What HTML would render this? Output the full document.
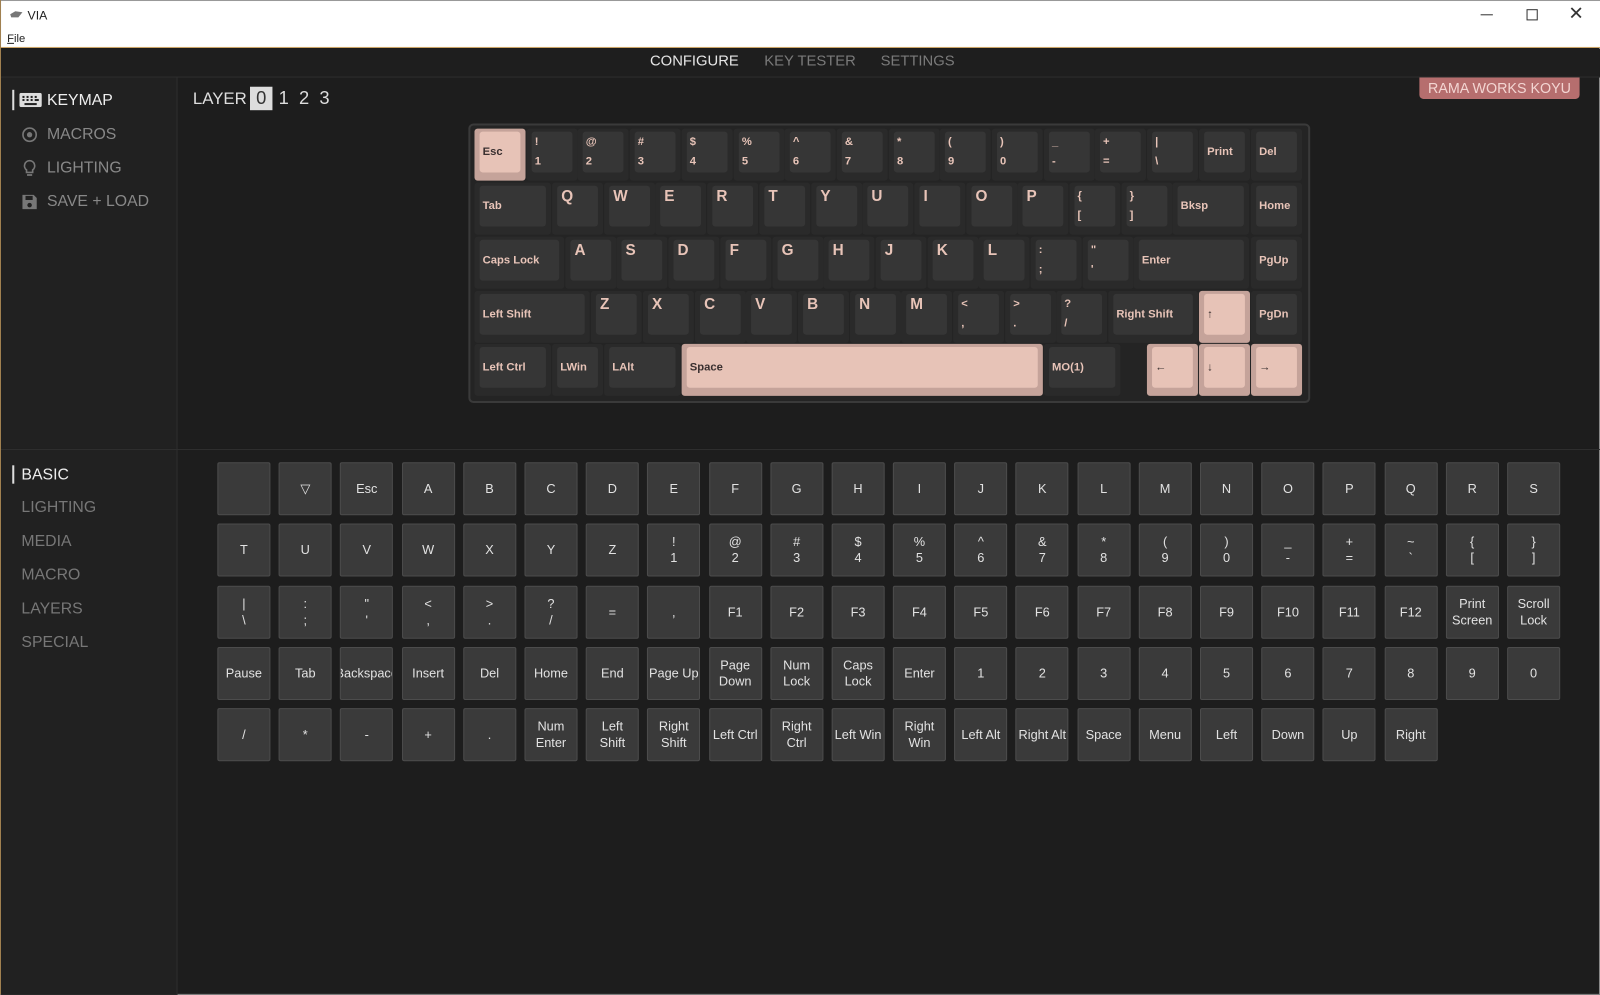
<!DOCTYPE html>
<html><head><meta charset="utf-8"><style>
*{box-sizing:border-box;margin:0;padding:0}
html,body{width:1600px;height:995px;overflow:hidden;background:#1d1d1d}
#w{position:absolute;left:0;top:0;width:1568px;height:975px;transform:scale(1.020408);transform-origin:0 0;background:#1d1d1d;font-family:"Liberation Sans",sans-serif;border-left:1px solid #a08050;border-right:1px solid #888;border-bottom:1px solid #888}
.a{position:absolute}
#title{left:0;top:0;width:1567px;height:47px;background:#fff;border-top:1px solid #999;border-bottom:1px solid #c8a060}
.nav{top:52px;font-size:14.5px;color:#7a7a7a}
.side{color:#888;font-size:15.5px}
.k{position:absolute;height:51px;background:#2a2a2a;border-radius:3px}
.k i{position:absolute;left:5px;right:5px;top:3px;bottom:8px;background:#363636;border-radius:3px;font-style:normal;color:#e8c4b8;font-weight:bold;font-size:11px;padding-left:3px;padding-top:1px;line-height:19px;white-space:nowrap}
.k.m i{line-height:40px;padding-top:0}
.k.l i{font-size:15px;padding-left:4px}
.k.p{background:#c5a39a}.k.p i{background:#e7c3b7;color:#3a3030}
#grid{position:absolute;left:212px;top:453px;display:grid;grid-template-columns:repeat(22,52px);column-gap:8.2px;row-gap:8.3px}
#grid div{width:52px;height:52px;background:#3a3a3a;border:1px solid #4c4c4c;border-radius:2px;color:#e2e2e2;font-size:12.5px;display:flex;align-items:center;justify-content:center;text-align:center;line-height:16px;overflow:hidden;white-space:nowrap}
</style></head><body><div id="w">
<div id="title" class="a">
 <svg class="a" style="left:8px;top:9px" width="14" height="8"><path d="M1 4 L6 1 L13 2 L9 7 L2 7Z" fill="#777"/></svg>
 <div class="a" style="left:26px;top:7px;font-size:12px;color:#222">VIA</div>
 <div class="a" style="left:6px;top:31px;font-size:11px;color:#222"><u>F</u>ile</div>
 <div class="a" style="left:1450px;top:13px;width:12px;height:1px;background:#333"></div>
 <div class="a" style="left:1495px;top:8px;width:11px;height:11px;border:1px solid #333"></div>
 <div class="a" style="left:1536px;top:2px;font-size:18px;color:#333">✕</div>
</div>
<div class="a" style="left:0;top:48px;width:1567px;height:28px;border-bottom:1px solid #2e2e2e;background:#1e1e1e"></div>
<div class="a nav" style="left:636px;color:#e6e6e6">CONFIGURE</div>
<div class="a nav" style="left:748px">KEY TESTER</div>
<div class="a nav" style="left:862px">SETTINGS</div>
<div class="a" style="left:0;top:76px;width:173px;height:899px;background:#212121;border-right:1px solid #2e2e2e"></div>
<div class="a" style="left:0;top:440px;width:1567px;height:1px;background:#2e2e2e"></div>
<div class="a" style="left:11px;top:88px;width:2px;height:20px;background:#ddd"></div>
<svg class="a" style="left:18px;top:91px" width="22" height="14"><rect x="0" y="0" width="22" height="14" rx="2" fill="#ddd"/><g fill="#212121"><rect x="3" y="3" width="2" height="2"/><rect x="7" y="3" width="2" height="2"/><rect x="11" y="3" width="2" height="2"/><rect x="15" y="3" width="2" height="2"/><rect x="3" y="6" width="2" height="2"/><rect x="7" y="6" width="2" height="2"/><rect x="11" y="6" width="2" height="2"/><rect x="15" y="6" width="4" height="2"/><rect x="5" y="10" width="12" height="2"/></g></svg>
<div class="a side" style="left:45px;top:90px;color:#eee">KEYMAP</div>
<svg class="a" style="left:20px;top:124px" width="16" height="16"><circle cx="8" cy="8" r="6.5" stroke="#777" stroke-width="1.6" fill="none"/><circle cx="8" cy="8" r="2.6" fill="#777"/></svg>
<div class="a side" style="left:45px;top:123px">MACROS</div>
<svg class="a" style="left:21px;top:156px" width="14" height="18"><path d="M7 1.5a5 5 0 0 0-3 9v2.5h6v-2.5a5 5 0 0 0-3-9z" stroke="#777" stroke-width="1.6" fill="none"/><path d="M4.5 15.5h5" stroke="#777" stroke-width="1.6"/></svg>
<div class="a side" style="left:45px;top:156px">LIGHTING</div>
<svg class="a" style="left:20px;top:190px" width="16" height="16"><path d="M1 1h11l3 3v11H1z" fill="#777"/><rect x="4" y="2" width="7" height="4" fill="#212121"/><circle cx="8" cy="11" r="2.2" fill="#212121"/></svg>
<div class="a side" style="left:45px;top:189px">SAVE + LOAD</div>
<div class="a" style="left:188px;top:88px;font-size:16.5px;color:#ddd">LAYER</div>
<div class="a" style="left:244px;top:85px;width:22px;height:23px;background:#ddd;color:#333;font-size:18px;text-align:center;line-height:23px">0</div>
<div class="a" style="left:272px;top:86px;font-size:18px;color:#ddd;word-spacing:5px">1 2 3</div>
<div class="a" style="left:1390px;top:76px;width:157px;height:21px;background:#b66e6e;border-radius:0 0 4px 4px;color:#f3d5d2;font-size:14px;text-align:center;line-height:21px">RAMA WORKS KOYU</div>
<div class="a" style="left:458px;top:121px;width:825px;height:274px;background:#242424;border:2px solid #3a3a3a;border-radius:5px"></div>
<!-- row1 -->
<div class="k p m" style="left:464px;top:126px;width:50px"><i>Esc</i></div>
<div class="k" style="left:515px;top:126px;width:50px"><i>!<br>1</i></div>
<div class="k" style="left:565px;top:126px;width:50px"><i>@<br>2</i></div>
<div class="k" style="left:616px;top:126px;width:50px"><i>#<br>3</i></div>
<div class="k" style="left:667px;top:126px;width:50px"><i>$<br>4</i></div>
<div class="k" style="left:718px;top:126px;width:50px"><i>%<br>5</i></div>
<div class="k" style="left:768px;top:126px;width:50px"><i>^<br>6</i></div>
<div class="k" style="left:819px;top:126px;width:50px"><i>&amp;<br>7</i></div>
<div class="k" style="left:870px;top:126px;width:50px"><i>*<br>8</i></div>
<div class="k" style="left:920px;top:126px;width:50px"><i>(<br>9</i></div>
<div class="k" style="left:971px;top:126px;width:50px"><i>)<br>0</i></div>
<div class="k" style="left:1022px;top:126px;width:50px"><i>_<br>-</i></div>
<div class="k" style="left:1072px;top:126px;width:50px"><i>+<br>=</i></div>
<div class="k" style="left:1123px;top:126px;width:50px"><i>|<br>\</i></div>
<div class="k m" style="left:1174px;top:126px;width:50px"><i>Print</i></div>
<div class="k m" style="left:1225px;top:126px;width:50px"><i>Del</i></div>
<!-- row2 -->
<div class="k m" style="left:464px;top:179px;width:75px"><i>Tab</i></div>
<div class="k l" style="left:540px;top:179px;width:50px"><i>Q</i></div>
<div class="k l" style="left:591px;top:179px;width:50px"><i>W</i></div>
<div class="k l" style="left:641px;top:179px;width:50px"><i>E</i></div>
<div class="k l" style="left:692px;top:179px;width:50px"><i>R</i></div>
<div class="k l" style="left:743px;top:179px;width:50px"><i>T</i></div>
<div class="k l" style="left:794px;top:179px;width:50px"><i>Y</i></div>
<div class="k l" style="left:844px;top:179px;width:50px"><i>U</i></div>
<div class="k l" style="left:895px;top:179px;width:50px"><i>I</i></div>
<div class="k l" style="left:946px;top:179px;width:50px"><i>O</i></div>
<div class="k l" style="left:996px;top:179px;width:50px"><i>P</i></div>
<div class="k" style="left:1047px;top:179px;width:50px"><i>{<br>[</i></div>
<div class="k" style="left:1098px;top:179px;width:50px"><i>}<br>]</i></div>
<div class="k m" style="left:1148px;top:179px;width:75px"><i>Bksp</i></div>
<div class="k m" style="left:1225px;top:179px;width:50px"><i>Home</i></div>
<!-- row3 -->
<div class="k m" style="left:464px;top:232px;width:88px"><i>Caps Lock</i></div>
<div class="k l" style="left:553px;top:232px;width:50px"><i>A</i></div>
<div class="k l" style="left:603px;top:232px;width:50px"><i>S</i></div>
<div class="k l" style="left:654px;top:232px;width:50px"><i>D</i></div>
<div class="k l" style="left:705px;top:232px;width:50px"><i>F</i></div>
<div class="k l" style="left:756px;top:232px;width:50px"><i>G</i></div>
<div class="k l" style="left:806px;top:232px;width:50px"><i>H</i></div>
<div class="k l" style="left:857px;top:232px;width:50px"><i>J</i></div>
<div class="k l" style="left:908px;top:232px;width:50px"><i>K</i></div>
<div class="k l" style="left:958px;top:232px;width:50px"><i>L</i></div>
<div class="k" style="left:1009px;top:232px;width:50px"><i>:<br>;</i></div>
<div class="k" style="left:1060px;top:232px;width:50px"><i>"<br>'</i></div>
<div class="k m" style="left:1110px;top:232px;width:113px"><i>Enter</i></div>
<div class="k m" style="left:1225px;top:232px;width:50px"><i>PgUp</i></div>
<!-- row4 -->
<div class="k m" style="left:464px;top:285px;width:113px"><i>Left Shift</i></div>
<div class="k l" style="left:578px;top:285px;width:50px"><i>Z</i></div>
<div class="k l" style="left:629px;top:285px;width:50px"><i>X</i></div>
<div class="k l" style="left:680px;top:285px;width:50px"><i>C</i></div>
<div class="k l" style="left:730px;top:285px;width:50px"><i>V</i></div>
<div class="k l" style="left:781px;top:285px;width:50px"><i>B</i></div>
<div class="k l" style="left:832px;top:285px;width:50px"><i>N</i></div>
<div class="k l" style="left:882px;top:285px;width:50px"><i>M</i></div>
<div class="k" style="left:933px;top:285px;width:50px"><i>&lt;<br>,</i></div>
<div class="k" style="left:984px;top:285px;width:50px"><i>&gt;<br>.</i></div>
<div class="k" style="left:1034px;top:285px;width:50px"><i>?<br>/</i></div>
<div class="k m" style="left:1085px;top:285px;width:88px"><i>Right Shift</i></div>
<div class="k p m" style="left:1174px;top:285px;width:50px"><i>↑</i></div>
<div class="k m" style="left:1225px;top:285px;width:50px"><i>PgDn</i></div>
<!-- row5 -->
<div class="k m" style="left:464px;top:337px;width:75px"><i>Left Ctrl</i></div>
<div class="k m" style="left:540px;top:337px;width:50px"><i>LWin</i></div>
<div class="k m" style="left:591px;top:337px;width:75px"><i>LAlt</i></div>
<div class="k p m" style="left:667px;top:337px;width:354px"><i>Space</i></div>
<div class="k m" style="left:1022px;top:337px;width:75px"><i>MO(1)</i></div>
<div class="k p m" style="left:1123px;top:337px;width:50px"><i>←</i></div>
<div class="k p m" style="left:1174px;top:337px;width:50px"><i>↓</i></div>
<div class="k p m" style="left:1225px;top:337px;width:50px"><i>→</i></div>
<!-- bottom sidebar -->
<div class="a" style="left:11px;top:456px;width:2px;height:18px;background:#ddd"></div>
<div class="a side" style="left:20px;top:457px;color:#eee">BASIC</div>
<div class="a side" style="left:20px;top:489px;color:#777">LIGHTING</div>
<div class="a side" style="left:20px;top:522px;color:#777">MEDIA</div>
<div class="a side" style="left:20px;top:555px;color:#777">MACRO</div>
<div class="a side" style="left:20px;top:588px;color:#777">LAYERS</div>
<div class="a side" style="left:20px;top:621px;color:#777">SPECIAL</div>
<div id="grid">
<div></div><div>▽</div><div>Esc</div><div>A</div><div>B</div><div>C</div><div>D</div><div>E</div><div>F</div><div>G</div><div>H</div><div>I</div><div>J</div><div>K</div><div>L</div><div>M</div><div>N</div><div>O</div><div>P</div><div>Q</div><div>R</div><div>S</div>
<div>T</div><div>U</div><div>V</div><div>W</div><div>X</div><div>Y</div><div>Z</div><div>!<br>1</div><div>@<br>2</div><div>#<br>3</div><div>$<br>4</div><div>%<br>5</div><div>^<br>6</div><div>&amp;<br>7</div><div>*<br>8</div><div>(<br>9</div><div>)<br>0</div><div>_<br>-</div><div>+<br>=</div><div>~<br>`</div><div>{<br>[</div><div>}<br>]</div>
<div>|<br>\</div><div>:<br>;</div><div>"<br>'</div><div>&lt;<br>,</div><div>&gt;<br>.</div><div>?<br>/</div><div>=</div><div>,</div><div>F1</div><div>F2</div><div>F3</div><div>F4</div><div>F5</div><div>F6</div><div>F7</div><div>F8</div><div>F9</div><div>F10</div><div>F11</div><div>F12</div><div>Print<br>Screen</div><div>Scroll<br>Lock</div>
<div>Pause</div><div>Tab</div><div>Backspace</div><div>Insert</div><div>Del</div><div>Home</div><div>End</div><div>Page Up</div><div>Page<br>Down</div><div>Num<br>Lock</div><div>Caps<br>Lock</div><div>Enter</div><div>1</div><div>2</div><div>3</div><div>4</div><div>5</div><div>6</div><div>7</div><div>8</div><div>9</div><div>0</div>
<div>/</div><div>*</div><div>-</div><div>+</div><div>.</div><div>Num<br>Enter</div><div>Left<br>Shift</div><div>Right<br>Shift</div><div>Left Ctrl</div><div>Right<br>Ctrl</div><div>Left Win</div><div>Right<br>Win</div><div>Left Alt</div><div>Right Alt</div><div>Space</div><div>Menu</div><div>Left</div><div>Down</div><div>Up</div><div>Right</div>
</div>
</div></body></html>
